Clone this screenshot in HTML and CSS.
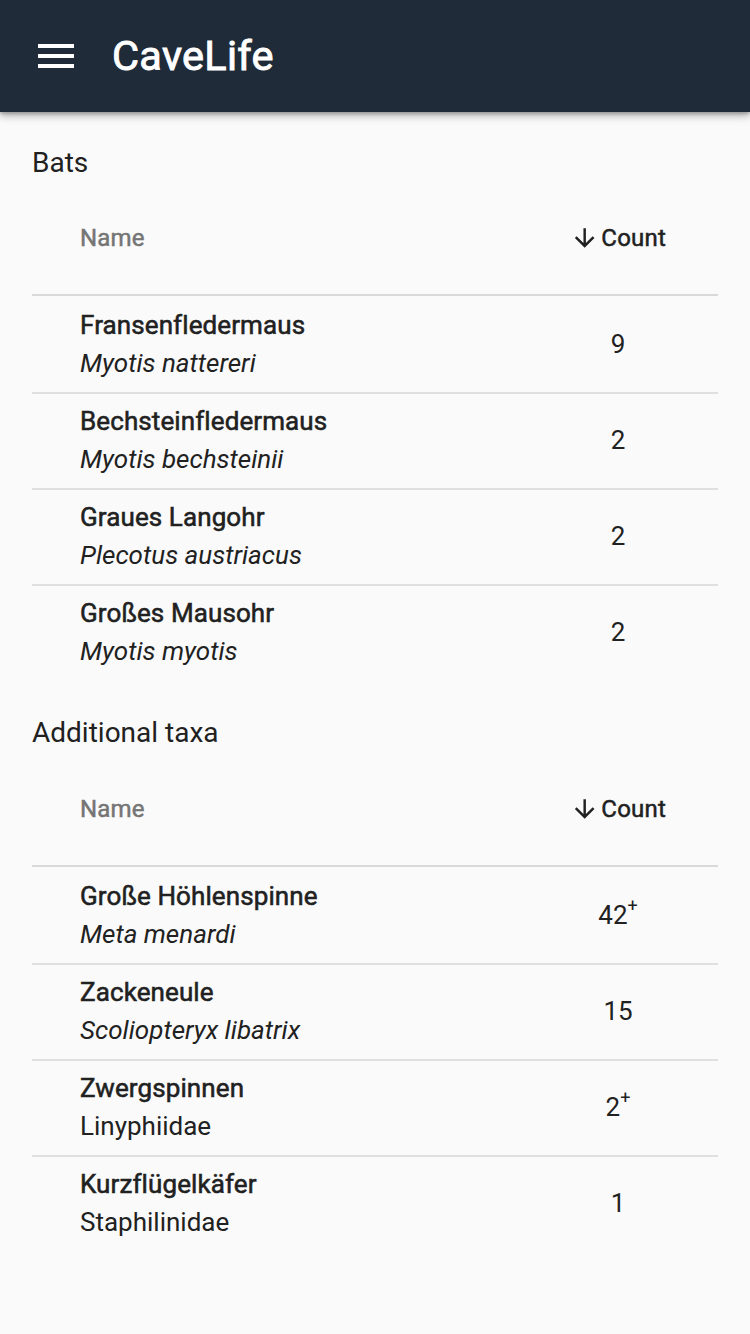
FILE: index.html
```html
<!DOCTYPE html>
<html lang="de">
<head>
<meta charset="utf-8">
<title>CaveLife</title>
<link rel="stylesheet" href="styles.css">
</head>
<body>
<header class="appbar">
  <svg class="menu-icon" viewBox="0 0 24 24" width="48" height="48" aria-hidden="true"><path d="M3 18h18v-2H3v2zm0-5h18v-2H3v2zm0-7v2h18V6H3z" fill="#fff"/></svg>
  <h1 class="app-title">CaveLife</h1>
</header>
<main class="content">
  <section class="section">
    <h2 class="section-title">Bats</h2>
    <div class="table">
      <div class="head-row">
        <div class="col-name head-name">Name</div>
        <div class="col-count head-count"><svg class="sort-icon" viewBox="0 0 24 24" width="32" height="32" aria-hidden="true"><path d="M20 12l-1.41-1.41L13 16.17V4h-2v12.17l-5.58-5.59L4 12l8 8 8-8z" fill="#212121"/></svg><span>Count</span></div>
      </div>
      <div class="row">
        <div class="col-name"><div class="common">Fransenfledermaus</div><div class="sci">Myotis nattereri</div></div>
        <div class="col-count">9</div>
      </div>
      <div class="row">
        <div class="col-name"><div class="common">Bechsteinfledermaus</div><div class="sci">Myotis bechsteinii</div></div>
        <div class="col-count">2</div>
      </div>
      <div class="row">
        <div class="col-name"><div class="common">Graues Langohr</div><div class="sci">Plecotus austriacus</div></div>
        <div class="col-count">2</div>
      </div>
      <div class="row">
        <div class="col-name"><div class="common">Großes Mausohr</div><div class="sci">Myotis myotis</div></div>
        <div class="col-count">2</div>
      </div>
    </div>
  </section>
  <section class="section">
    <h2 class="section-title">Additional taxa</h2>
    <div class="table">
      <div class="head-row">
        <div class="col-name head-name">Name</div>
        <div class="col-count head-count"><svg class="sort-icon" viewBox="0 0 24 24" width="32" height="32" aria-hidden="true"><path d="M20 12l-1.41-1.41L13 16.17V4h-2v12.17l-5.58-5.59L4 12l8 8 8-8z" fill="#212121"/></svg><span>Count</span></div>
      </div>
      <div class="row">
        <div class="col-name"><div class="common">Große Höhlenspinne</div><div class="sci">Meta menardi</div></div>
        <div class="col-count">42<sup class="plus">+</sup></div>
      </div>
      <div class="row">
        <div class="col-name"><div class="common">Zackeneule</div><div class="sci">Scoliopteryx libatrix</div></div>
        <div class="col-count">15</div>
      </div>
      <div class="row">
        <div class="col-name"><div class="common">Zwergspinnen</div><div class="sci upright">Linyphiidae</div></div>
        <div class="col-count">2<sup class="plus">+</sup></div>
      </div>
      <div class="row">
        <div class="col-name"><div class="common">Kurzflügelkäfer</div><div class="sci upright">Staphilinidae</div></div>
        <div class="col-count">1</div>
      </div>
    </div>
  </section>
</main>
</body>
</html>
```

FILE: styles.css
```css
* { box-sizing: border-box; }
html, body {
  margin: 0;
  padding: 0;
  background: #fafafa;
  font-family: Roboto, "Liberation Sans", sans-serif;
  color: #212121;
  min-height: 1334px;
}
.appbar {
  height: 112px;
  background: #1f2b38;
  display: flex;
  align-items: center;
  padding-left: 32px;
  gap: 32px;
  box-shadow: 0 4px 8px rgba(0,0,0,0.28), 0 2px 3px rgba(0,0,0,0.2);
  position: relative;
  z-index: 1;
}
.menu-icon { display: block; }
.app-title {
  margin: 0;
  color: #fff;
  font-size: 41.5px;
  font-weight: 400;
  -webkit-text-stroke: 0.9px #fff;
  letter-spacing: 0.3px;
  line-height: 48px;
}
.content {
  padding: 0 32px;
}
.section-title {
  margin: 0 0 2px;
  padding-top: 33px;
  font-size: 28px;
  font-weight: 400;
  line-height: 36px;
  color: #212121;
}
.section + .section .section-title {
  padding-top: 35px;
  margin-bottom: 3px;
}
.head-row {
  height: 113px;
  display: flex;
  align-items: center;
  border-bottom: 2px solid #d9d9d9;
}
.row {
  height: 96px;
  display: flex;
  align-items: center;
  border-bottom: 2px solid #e0e0e0;
}
.head-row + .row { height: 98px; padding-top: 2px; }
.row:last-child { border-bottom: 0; height: 94px; }
.col-name {
  flex: 1;
  padding-left: 48px;
  padding-bottom: 2px;
}
.col-count {
  width: 96px;
  margin-right: 52px;
  text-align: center;
  font-size: 26px;
  line-height: 36px;
  padding-bottom: 2px;
}
.head-name {
  font-size: 24px;
  font-weight: 400;
  -webkit-text-stroke: 0.5px #757575;
  letter-spacing: 0.2px;
  color: #757575;
}
.head-count {
  display: flex;
  align-items: center;
  justify-content: flex-end;
  font-size: 24px;
  font-weight: 400;
  -webkit-text-stroke: 0.5px #212121;
  letter-spacing: 0.2px;
  color: #212121;
}
.sort-icon { display: block; margin-right: 2px; }
.common {
  font-size: 26px;
  font-weight: 400;
  -webkit-text-stroke: 0.55px #212121;
  letter-spacing: 0.1px;
  line-height: 38px;
}
.sci {
  font-size: 26px;
  font-style: italic;
  line-height: 38px;
}
.sci.upright { font-style: normal; }
.plus {
  font-size: 18px;
  line-height: 0;
  vertical-align: 12px;
}
```
